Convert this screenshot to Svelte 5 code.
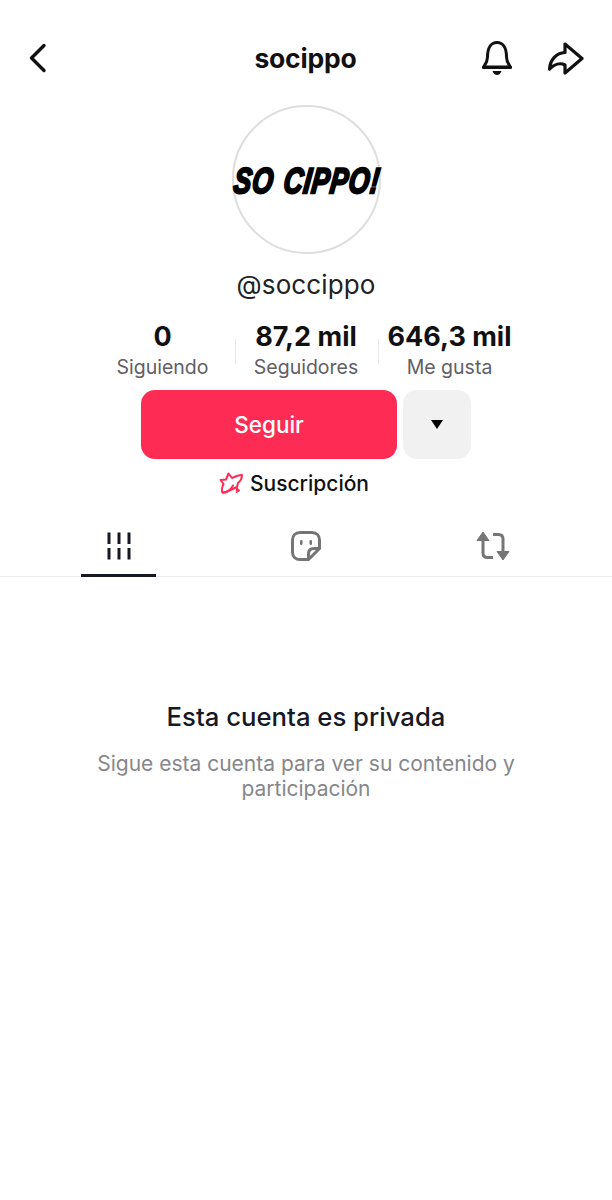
<script>
  const stats = [
    { value: '0', label: 'Siguiendo' },
    { value: '87,2 mil', label: 'Seguidores' },
    { value: '646,3 mil', label: 'Me gusta' }
  ];
</script>

<div class="page">
  <header class="top">
    <svg class="back" width="22" height="32" viewBox="0 0 22 32" fill="none" stroke="#111" stroke-width="3.4" stroke-linecap="round" stroke-linejoin="round"><path d="M17 3.5 L4.5 16 L17 28.5"/></svg>
    <h1>socippo</h1>
    <div class="top-icons">
      <svg width="34" height="36" viewBox="0 0 34 36" fill="none" stroke="#111" stroke-width="3" stroke-linecap="round" stroke-linejoin="round">
        <path d="M7.5 17 C7.5 8 11 2.5 17 2.5 C23 2.5 26.5 8 26.5 17 C26.5 22 29 24.5 30.5 27 L3.5 27 C5 24.5 7.5 22 7.5 17 Z"/>
        <path d="M3.5 27.5 H30.5"/>
        <path d="M12.500 31 H21.500 C20.500 34 18.500 35 17 35 C15.500 35 13.500 34 12.500 31 Z" fill="#111" stroke="none"/>
      </svg>
      <svg width="37" height="33" viewBox="0 0 37 33" fill="none" stroke="#111" stroke-width="3.200" stroke-linecap="round" stroke-linejoin="round">
        <path d="M18 2 L35 16.500 L18 31 V23 C13 20.500 7 22.500 2.500 27 C3 18 9 11 18 10.500 Z"/>
      </svg>
    </div>
  </header>

  <div class="avatar"><span class="logo">SO CIPPO!</span></div>
  <div class="handle">@soccippo</div>

  <div class="stats">
    {#each stats as s, i}
      {#if i > 0}<span class="sep"></span>{/if}
      <div class="stat">
        <strong>{s.value}</strong>
        <span>{s.label}</span>
      </div>
    {/each}
  </div>

  <div class="actions">
    <button class="follow">Seguir</button>
    <button class="more" aria-label="Más"><span class="tri"></span></button>
  </div>

  <div class="sub">
    <svg width="24" height="22" viewBox="0 0 24 22" fill="none" stroke="#fe2c55" stroke-width="2" stroke-linecap="round" stroke-linejoin="round">
      <path d="M9.500 1.500 L13 6 C16 4.500 20 3 23 3 C23 6.500 21.500 9 19 11 L18 15 L6 20.500 L3.500 20.500 C2.500 18 3 15 4.500 12 L1.500 8 L7 7.500 Z"/>
      <path d="M3.500 20.500 C8 20.500 12 17.500 14 13.500"/>
      <path d="M18 16 L21 18.500 L17.500 20.500 Z" fill="#fe2c55" stroke-width="1"/>
    </svg>
    <span>Suscripción</span>
  </div>

  <nav class="tabs">
    <div class="tab active">
      <svg width="24" height="28" viewBox="0 0 24 28" fill="#161823">
        <rect x="0.500" y="0.500" width="3" height="11.500"/><rect x="10.500" y="0.500" width="3" height="11.500"/><rect x="20.500" y="0.500" width="3" height="11.500"/>
        <rect x="0.500" y="16" width="3" height="11.500"/><rect x="10.500" y="16" width="3" height="11.500"/><rect x="20.500" y="16" width="3" height="11.500"/>
      </svg>
    </div>
    <div class="tab">
      <svg width="30" height="30" viewBox="0 0 30 30" fill="none" stroke="#757575" stroke-width="3" stroke-linejoin="round" stroke-linecap="round">
        <path d="M9 1.500 H21 C25.500 1.500 28.500 4.500 28.500 9 V17.500 L17.500 28.500 H9 C4.500 28.500 1.500 25.500 1.500 21 V9 C1.500 4.500 4.500 1.500 9 1.500 Z"/>
        <path d="M28 17.500 H23 C19.500 17.500 17.500 19.500 17.500 23 V28"/>
        <rect x="9" y="9" width="2.500" height="5" rx="1.200" fill="#757575" stroke="none"/>
        <rect x="18.500" y="9" width="2.500" height="5" rx="1.200" fill="#757575" stroke="none"/>
      </svg>
    </div>
    <div class="tab">
      <svg width="34" height="30" viewBox="0 0 34 30" fill="none" stroke="#757575" stroke-width="3" stroke-linejoin="round">
        <path d="M7 8 V22 C7 25 8.500 26.500 11.500 26.500 H17"/>
        <path d="M27 22 V8 C27 5 25.500 3.500 22.500 3.500 H17"/>
        <path d="M7 1 L13 9.500 H1 Z" fill="#757575" stroke-width="1"/>
        <path d="M27 29 L21 20.500 H33 Z" fill="#757575" stroke-width="1"/>
      </svg>
    </div>
  </nav>

  <section class="private">
    <h2>Esta cuenta es privada</h2>
    <p>Sigue esta cuenta para ver su contenido y participación</p>
  </section>
</div>

<style>
  :global(body) { margin: 0; background: #fff; }
  .page {
    width: 612px;
    height: 1200px;
    overflow: hidden;
    display: flex;
    flex-direction: column;
    align-items: center;
    font-family: Inter, "Liberation Sans", sans-serif;
    color: #161823;
    background: #fff;
  }
  .top {
    width: 100%;
    box-sizing: border-box;
    height: 40px;
    margin-top: 38px;
    padding: 0 28px 0 27px;
    display: grid;
    grid-template-columns: 1fr auto 1fr;
    align-items: center;
  }
  .back { justify-self: start; }
  h1 {
    margin: 0;
    font-size: 26.500px;
    font-weight: 700;
    color: #111;
    letter-spacing: -0.2px;
  }
  .top-icons {
    justify-self: end;
    display: flex;
    align-items: center;
    gap: 33px;
    margin-left: -20px;
  }
  .avatar {
    margin-top: 27px;
    width: 149px;
    height: 149px;
    box-sizing: border-box;
    border: 2px solid #dedede;
    border-radius: 50%;
    display: flex;
    align-items: center;
    justify-content: center;
    overflow: visible;
  }
  .logo {
    font-family: "Liberation Sans", sans-serif;
    font-weight: 700;
    font-style: italic;
    font-size: 28px;
    color: #000;
    white-space: nowrap;
    -webkit-text-stroke: 1.800px #000;
    letter-spacing: 0.8px;
    word-spacing: 2px;
    transform: translate(1px, 1px) skewX(-7deg) scale(0.95, 1.28);
    line-height: 1;
  }
  .handle {
    margin-top: 15px;
    font-size: 26px;
    line-height: 32px;
    color: #222;
    letter-spacing: 0.1px;
  }
  .stats {
    margin-top: 20px;
    width: 100%;
    box-sizing: border-box;
    padding-left: 90px;
    display: grid;
    grid-template-columns: 145px 1px 142px 1px 141px;
    align-items: center;
  }
  .stat {
    display: flex;
    flex-direction: column;
    align-items: center;
    white-space: nowrap;
  }
  .stat:nth-child(3) { padding-right: 2px; }
  .stat strong {
    font-size: 27px;
    line-height: 32px;
    font-weight: 700;
    color: #111;
  }
  .stat span {
    font-size: 19.500px;
    line-height: 28px;
    color: #5f6065;
  }
  .sep {
    width: 1px;
    height: 25px;
    background: #e9e9ea;
  }
  .actions {
    margin-top: 9px;
    display: flex;
    gap: 6px;
  }
  button {
    border: 0;
    padding: 0;
    height: 69px;
    border-radius: 14px;
    font-family: inherit;
    display: flex;
    align-items: center;
    justify-content: center;
  }
  .follow {
    width: 256px;
    background: #fe2c55;
    color: #fff;
    font-size: 22.500px;
    font-weight: 500;
  }
  .more {
    width: 68px;
    background: #f1f1f2;
  }
  .tri {
    width: 0;
    height: 0;
    border-left: 6.500px solid transparent;
    border-right: 6.500px solid transparent;
    border-top: 9px solid #000;
  }
  .sub {
    margin-top: 10px;
    margin-right: 24px;
    height: 28px;
    display: flex;
    align-items: center;
    gap: 7px;
    font-size: 21px;
    font-weight: 500;
    color: #111;
  }
  .tabs {
    margin-top: 22px;
    padding: 0 25px;
    width: 562px;
    box-sizing: content-box;
    height: 57px;
    display: grid;
    grid-template-columns: repeat(3, 1fr);
    border-bottom: 1px solid #ececed;
  }
  .tab {
    position: relative;
    display: flex;
    align-items: center;
    justify-content: center;
    padding-bottom: 3px;
    box-sizing: border-box;
    height: 57px;
  }
  .tab.active::after {
    content: "";
    position: absolute;
    left: 50%;
    bottom: -1px;
    width: 75px;
    height: 3px;
    margin-left: -37.500px;
    background: #161823;
  }
  .private {
    margin-top: 124px;
    text-align: center;
    width: 440px;
  }
  h2 {
    margin: 0;
    font-size: 25.700px;
    line-height: 32px;
    font-weight: 500;
    color: #161823;
  }
  p {
    margin: 18px 0 0;
    font-size: 21px;
    line-height: 25px;
    color: #86878b;
  }
</style>
